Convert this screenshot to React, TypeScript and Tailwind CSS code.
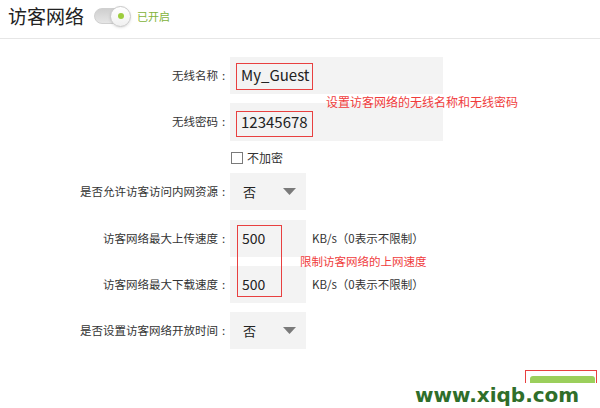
const font = {
  fontFamily: '"Noto Sans CJK SC", "Noto Sans", sans-serif',
};

function Label({ text }: { text: string }) {
  return (
    <div className="flex w-[230px] shrink-0 justify-end text-[11.5px] text-[#333]">
      <span>{text}</span>
      <span className="w-[12px] pl-[4px]">:</span>
    </div>
  );
}

function Select() {
  return (
    <div className="flex h-[37px] w-[76px] items-center bg-[#f3f3f3] pl-[13px] pr-[10px]">
      <span className="text-[13px] text-[#222]">否</span>
      <svg className="ml-auto" width="13" height="7" viewBox="0 0 13 7">
        <path d="M0 0 H13 L6.5 7 Z" fill="#7a7a7a" />
      </svg>
    </div>
  );
}

function SpeedRow({ label, mt }: { label: string; mt: string }) {
  return (
    <div className={`flex items-center ${mt}`}>
      <Label text={label} />
      <div className="flex h-[37px] w-[76px] items-center bg-[#f3f3f3] pl-[12px] text-[14px] text-[#222]">500</div>
      <span className="ml-[6px] text-[11.5px] text-[#333]">KB/s（0表示不限制）</span>
    </div>
  );
}

export default function App() {
  return (
    <div className="relative h-[408px] w-[600px] overflow-hidden bg-white" style={font}>
      <div className="flex h-[39px] items-center border-b border-[#e6e6e6] pl-[8px] pb-[6px]">
        <span className="text-[19px] text-[#222]">访客网络</span>
        <div className="relative ml-[10px] flex h-[21px] w-[37px] items-center">
          <div className="h-[16px] w-[36px] rounded-full border border-[#d0d0d0] bg-gradient-to-b from-[#cfcfcf] to-[#e6e6e6]" />
          <div className="absolute right-0 top-0 flex h-[21px] w-[21px] items-center justify-center rounded-full border border-[#c8c8c8] bg-gradient-to-b from-white to-[#f0f0f0] shadow-sm">
            <div className="h-[6px] w-[6px] rounded-full bg-[#9ccc3c]" />
          </div>
        </div>
        <span className="ml-[6px] text-[11px] text-[#7fb33a]">已开启</span>
      </div>

      <div className="flex flex-col">
        <div className="mt-[18px] flex items-center">
          <Label text="无线名称" />
          <div className="flex h-[37px] w-[213px] items-center bg-[#f3f3f3] pl-[11px] text-[15px] text-[#222]">My_Guest</div>
        </div>
        <div className="mt-[9px] flex items-center">
          <Label text="无线密码" />
          <div className="flex h-[38px] w-[213px] items-center bg-[#f3f3f3] pl-[11px] text-[15px] text-[#222]">12345678</div>
        </div>
        <div className="mt-[6px] flex h-[22px] items-center pl-[231px]">
          <span className="h-[12px] w-[12px] border border-[#7a7a7a] bg-white" />
          <span className="ml-[4px] text-[12px] text-[#333]">不加密</span>
        </div>
        <div className="mt-[4px] flex items-center">
          <Label text="是否允许访客访问内网资源" />
          <Select />
        </div>
        <SpeedRow label="访客网络最大上传速度" mt="mt-[10px]" />
        <SpeedRow label="访客网络最大下载速度" mt="mt-[9px]" />
        <div className="mt-[9px] flex items-center">
          <Label text="是否设置访客网络开放时间" />
          <Select />
        </div>
      </div>

      {/* annotations */}
      <div className="absolute left-[236px] top-[63px] h-[27px] w-[77px] border border-[#e84040]" />
      <div className="absolute left-[236px] top-[111px] h-[26px] w-[77px] border border-[#e84040]" />
      <div className="absolute left-[326px] top-[93px] text-[12px] text-[#f03c3c]">设置访客网络的无线名称和无线密码</div>
      <div className="absolute left-[237px] top-[225px] h-[72px] w-[45px] border border-[#e84040]" />
      <div className="absolute left-[300px] top-[253px] text-[11.5px] text-[#f03c3c]">限制访客网络的上网速度</div>

      <div className="absolute left-[530px] top-[376px] h-[40px] w-[65px] rounded-t-[3px] bg-[#9bcf5c]" />
      <div className="absolute left-[525px] top-[370px] h-[50px] w-[72px] border border-[#e84040]" />
      <div className="absolute left-[400px] top-[383px] flex h-[30px] w-[200px] items-start bg-white pl-[15px]">
        <span
          className="text-[20px] font-bold leading-[24px] text-[#2f6e2a]"
          style={{ fontFamily: '"DejaVu Sans", sans-serif' }}
        >
          www.xiqb.com
        </span>
      </div>
    </div>
  );
}
